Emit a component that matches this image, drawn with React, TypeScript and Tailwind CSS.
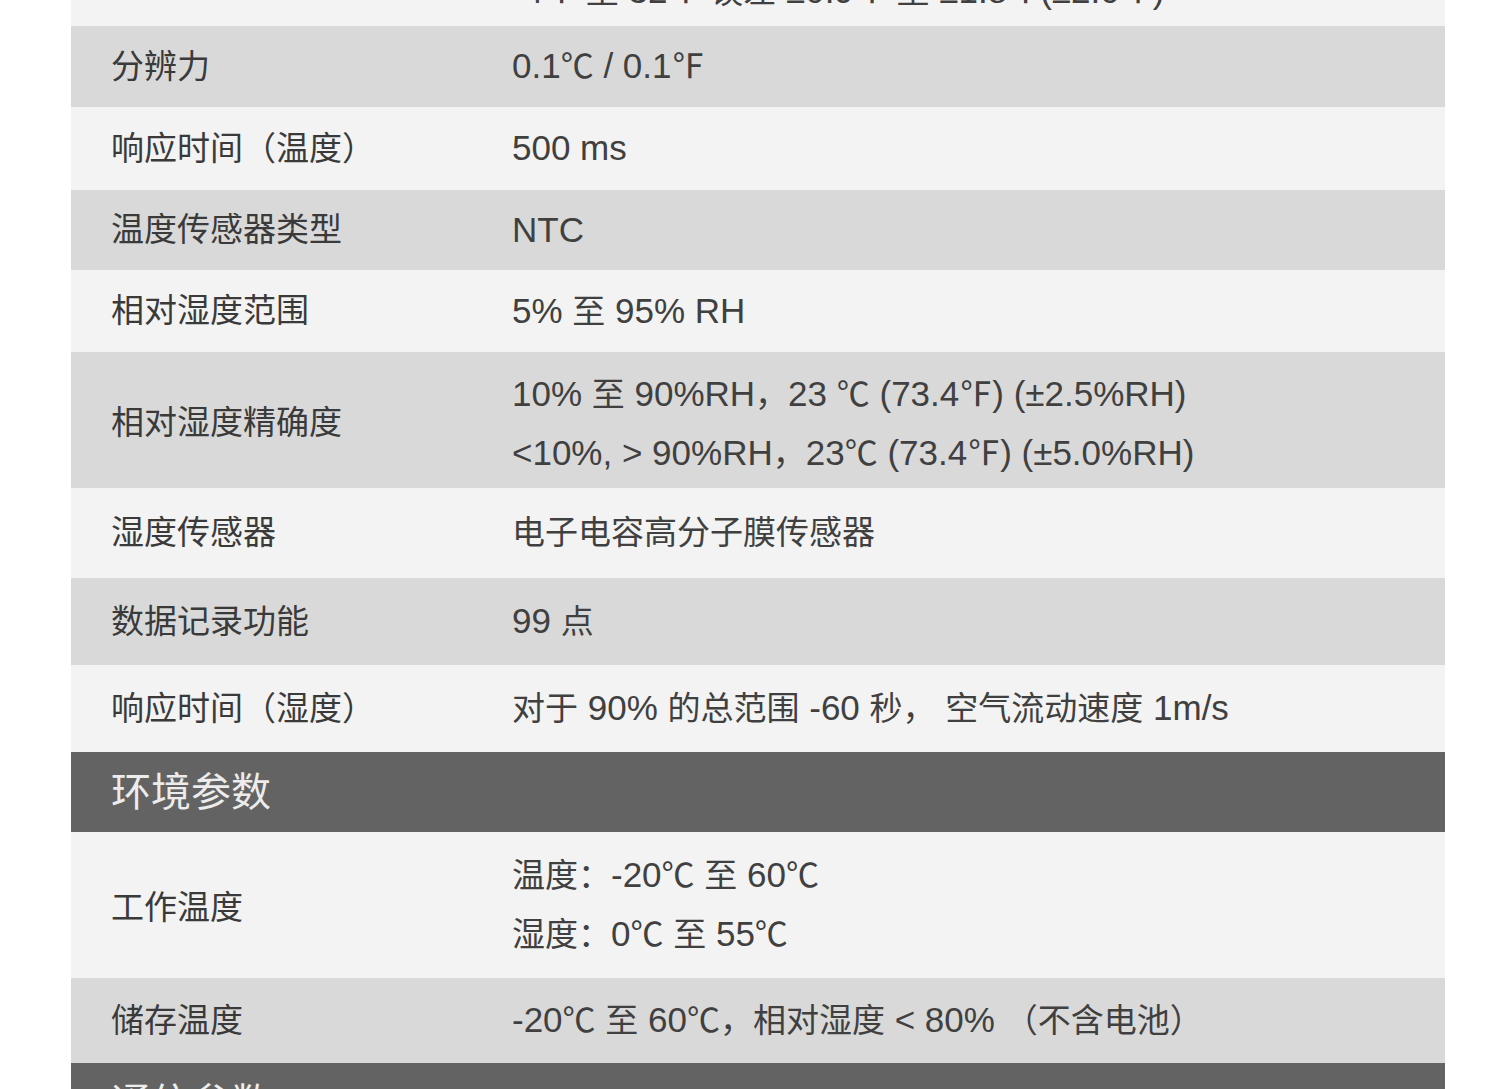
import React from "react";

type Row = {
  label: string;
  values: string[];
  tone: "light" | "gray";
  height: string;
  valuePad?: string;
};

const rowsA: Row[] = [
  { label: "分辨力", values: ["0.1℃ / 0.1℉"], tone: "gray", height: "h-[81px]" },
  { label: "响应时间（温度）", values: ["500 ms"], tone: "light", height: "h-[83px]" },
  { label: "温度传感器类型", values: ["NTC"], tone: "gray", height: "h-[80px]" },
  { label: "相对湿度范围", values: ["5% 至 95% RH"], tone: "light", height: "h-[82px]" },
  {
    label: "相对湿度精确度",
    values: [
      "10% 至 90%RH，23 ℃ (73.4℉) (±2.5%RH)",
      "<10%, > 90%RH，23℃ (73.4℉) (±5.0%RH)",
    ],
    tone: "gray",
    height: "h-[136px]",
    valuePad: "pt-[8px]",
  },
  { label: "湿度传感器", values: ["电子电容高分子膜传感器"], tone: "light", height: "h-[90px]" },
  { label: "数据记录功能", values: ["99 点"], tone: "gray", height: "h-[87px]" },
  {
    label: "响应时间（湿度）",
    values: ["对于 90% 的总范围 -60 秒， 空气流动速度 1m/s"],
    tone: "light",
    height: "h-[87px]",
  },
];

const rowsB: Row[] = [
  {
    label: "工作温度",
    values: ["温度：-20℃ 至 60℃", "湿度：0℃ 至 55℃"],
    tone: "light",
    height: "h-[146px]",
  },
  {
    label: "储存温度",
    values: ["-20℃ 至 60℃，相对湿度 < 80% （不含电池）"],
    tone: "gray",
    height: "h-[85px]",
  },
];

// latin runs are a bit larger than the CJK in the source image
function Mixed({ text }: { text: string }) {
  const parts = text.split(/([\u3000-\u303f\u4e00-\u9fff\uff00-\uffef℃℉]+)/);
  return (
    <>
      {parts.map((p, i) =>
        p === "" ? null : /[\u3000-\u303f\u4e00-\u9fff\uff00-\uffef℃℉]/.test(p) ? (
          <span key={i}>{p}</span>
        ) : (
          <span key={i} className="text-[35px]">
            {p}
          </span>
        ),
      )}
    </>
  );
}

function SpecRow({ row }: { row: Row }) {
  const multi = row.values.length > 1;
  return (
    <div
      className={`flex items-center ${row.height} ${
        row.tone === "gray" ? "bg-[#d9d9d9]" : "bg-[#f3f3f3]"
      }`}
    >
      <div className={`w-[441px] shrink-0 pl-[40px] text-[#3a3a3a] ${multi ? "pt-[6px]" : ""}`}>
        {row.label}
      </div>
      <div className={`flex flex-col gap-[14px] text-[#404040] ${row.valuePad ?? ""}`}>
        {row.values.map((v) => (
          <div key={v} className="leading-[44px]">
            <Mixed text={v} />
          </div>
        ))}
      </div>
    </div>
  );
}

function SectionHeader({ title }: { title: string }) {
  return (
    <div className="flex h-[80px] items-center bg-[#636363] pl-[40px] text-[40px] text-[#ececec]">
      {title}
    </div>
  );
}

export default function App() {
  return (
    <div
      className="h-[1089px] overflow-hidden bg-white text-[33px]"
      style={{ fontFamily: '"Liberation Sans", "Noto Sans CJK SC", sans-serif' }}
    >
      <div className="ml-[71px] -mt-[44px] w-[1374px]">
        <div className="flex h-[70px] items-center bg-[#f3f3f3]">
          <div className="w-[441px] shrink-0" />
          <div className="leading-[44px] text-[#404040]">
            <Mixed text="-4℉ 至 32℉ 误差 ±0.9℉ 至 ±1.8℉(±2.0℉)" />
          </div>
        </div>
        {rowsA.map((r) => (
          <SpecRow key={r.label} row={r} />
        ))}
        <SectionHeader title="环境参数" />
        {rowsB.map((r) => (
          <SpecRow key={r.label} row={r} />
        ))}
        <SectionHeader title="通信参数" />
      </div>
    </div>
  );
}
